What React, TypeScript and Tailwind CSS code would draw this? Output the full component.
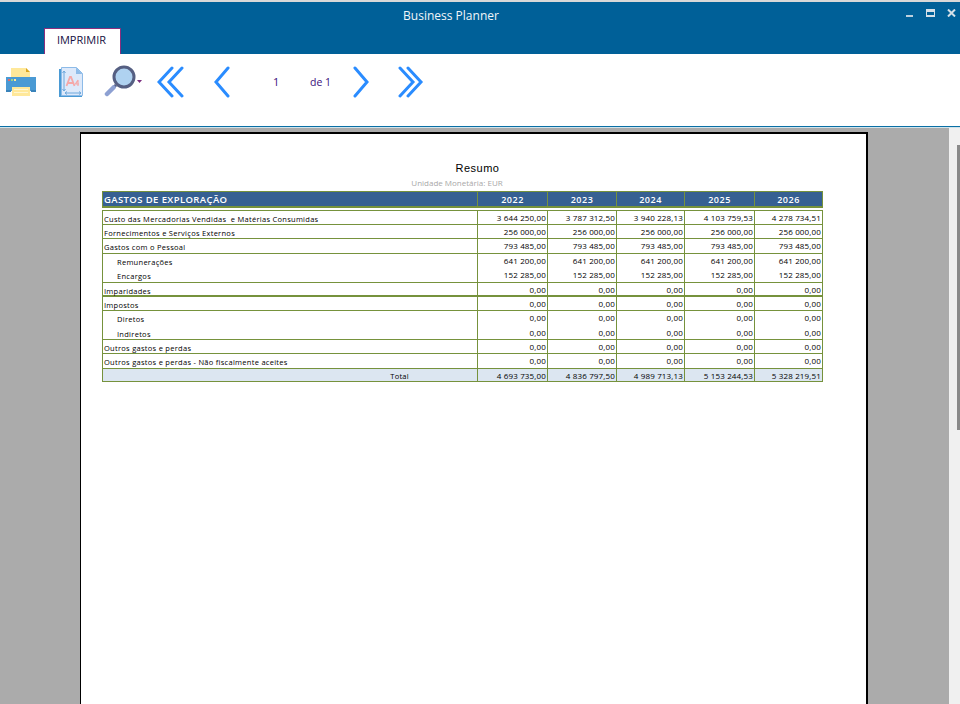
import React from 'react';

interface Row {
  label: string;
  values: string[];
  indent?: boolean;
  noLine?: boolean;
  thick?: boolean;
  h: string;
}

const zeros = ['0,00', '0,00', '0,00', '0,00', '0,00'];

const rows: Row[] = [
  { label: 'Custo das Mercadorias Vendidas  e Matérias Consumidas', values: ['3 644 250,00', '3 787 312,50', '3 940 228,13', '4 103 759,53', '4 278 734,51'], h: 'h-[14px]' },
  { label: 'Fornecimentos e Serviços Externos', values: ['256 000,00', '256 000,00', '256 000,00', '256 000,00', '256 000,00'], h: 'h-[14px]' },
  { label: 'Gastos com o Pessoal', values: ['793 485,00', '793 485,00', '793 485,00', '793 485,00', '793 485,00'], h: 'h-[15px]' },
  { label: 'Remunerações', values: ['641 200,00', '641 200,00', '641 200,00', '641 200,00', '641 200,00'], indent: true, noLine: true, h: 'h-[14px]' },
  { label: 'Encargos', values: ['152 285,00', '152 285,00', '152 285,00', '152 285,00', '152 285,00'], indent: true, h: 'h-[15px]' },
  { label: 'Imparidades', values: zeros, thick: true, h: 'h-[14px]' },
  { label: 'Impostos', values: zeros, h: 'h-[14px]' },
  { label: 'Diretos', values: zeros, indent: true, noLine: true, h: 'h-[15px]' },
  { label: 'Indiretos', values: zeros, indent: true, h: 'h-[14px]' },
  { label: 'Outros gastos e perdas', values: zeros, h: 'h-[14px]' },
  { label: 'Outros gastos e perdas - Não fiscalmente aceites', values: zeros, h: 'h-[15px]' },
];

const totals = ['4 693 735,00', '4 836 797,50', '4 989 713,13', '5 153 244,53', '5 328 219,51'];
const years = ['2022', '2023', '2024', '2025', '2026'];
const gridCols = 'grid grid-cols-[374px_70px_69px_68px_70px_68px]';

const PrinterIcon = () => (
  <svg width="32" height="32" viewBox="0 0 32 32">
    <path d="M6 2h15l4 4v8H6z" fill="#ffe89a" />
    <path d="M21 2l4 4h-4z" fill="#d9a520" />
    <rect x="1" y="11" width="30" height="14" fill="#4a9ad4" />
    <rect x="1" y="24" width="5" height="2" fill="#3a83ba" />
    <rect x="26" y="24" width="5" height="2" fill="#3a83ba" />
    <rect x="3" y="13" width="2" height="2" fill="#e06a6a" />
    <rect x="6" y="13" width="2" height="2" fill="#9ccf8a" />
    <rect x="9" y="13" width="2" height="2" fill="#ffe89a" />
    <rect x="7" y="21" width="18" height="9" fill="#ffe89a" />
    <rect x="9" y="23" width="14" height="1" fill="#fff6d0" />
    <rect x="9" y="26" width="14" height="1" fill="#fff6d0" />
  </svg>
);

const PageIcon = () => (
  <svg width="26" height="32" viewBox="0 0 26 32">
    <path d="M1 3h3v27h20v1H1z" fill="#4a9ad4" />
    <path d="M3.500 1.500h15l6 6v22h-21z" fill="#dde9fa" stroke="#8dbbe8" />
    <path d="M18 1.500l6.500 6.500H18z" fill="#8dbbe8" />
    <path d="M6 5v20M4.500 7L6 5l1.500 2M4.500 23L6 25l1.500-2" stroke="#6ea8dc" fill="none" />
    <path d="M7 27h16M9 25.500L7 27l2 1.500M21 25.500l2 1.500-2 1.500" stroke="#6ea8dc" fill="none" />
    <path d="M8.500 20l3.500-9h1l3.500 9M10 17h5" stroke="#f5a8a8" strokeWidth="1.800" fill="none" />
    <path d="M20 14l-2.500 4h3.500M20 14v6" stroke="#f5a8a8" strokeWidth="1.200" fill="none" />
  </svg>
);

const SearchIcon = () => (
  <svg width="38" height="34" viewBox="0 0 38 34">
    <circle cx="20" cy="12" r="10" fill="#afd2f0" stroke="#555f82" strokeWidth="3" />
    <path d="M12 20l-2.500 2.500" stroke="#555f82" strokeWidth="3" />
    <path d="M9.500 22.500L3 29" stroke="#8da0d2" strokeWidth="4.500" strokeLinecap="round" />
    <path d="M33 15h5l-2.500 3z" fill="#7a2d7e" />
  </svg>
);

const Chevron = ({ d, w }: { d: string; w: number }) => (
  <svg width={w} height="32" viewBox={`0 0 ${w} 32`} fill="none" stroke="#2a8cff" strokeWidth="3" strokeLinecap="round">
    <path d={d} />
  </svg>
);

export default function App() {
  return (
    <div className="w-[960px] h-[704px] overflow-hidden flex flex-col bg-white font-['Open_Sans',sans-serif]">
      {/* Title bar */}
      <div className="h-[54px] shrink-0 bg-[#006098] border-t-2 border-[#d8d8d8] relative flex flex-col">
        <div className="h-[26px] flex items-center justify-center pr-[58px]">
          <span className="text-[12px] text-[#f2f6fa] relative top-[1px]">Business Planner</span>
        </div>
        <div className="absolute right-[4px] top-[7px] flex items-center gap-[12px]">
          <div className="w-[7px] h-[2px] bg-[#bcd0de] mt-[6px]" />
          <div className="w-[9px] h-[8px] bg-[#d5e0e8] flex items-center ml-[1px]"><div className="w-[7px] h-[3px] bg-[#006098] ml-[1px] mt-[1px]" /></div>
          <svg width="9" height="8" viewBox="0 0 9 8"><path d="M1 0.500l7 7M8 0.500l-7 7" stroke="#d5e0e8" strokeWidth="2" /></svg>
        </div>
        <div className="mt-auto ml-[44px] w-[77px] h-[26px] bg-white border border-b-0 border-[#8a2f7e] flex items-center justify-center pr-[2px]">
          <span className="text-[11px] text-[#15103f] relative top-[-1px]">IMPRIMIR</span>
        </div>
      </div>

      {/* Toolbar */}
      <div className="h-[72px] shrink-0 bg-white flex items-start pt-[11px] relative">
        <div className="ml-[5px] mt-[1px]"><PrinterIcon /></div>
        <div className="ml-[21px] mt-[1px]"><PageIcon /></div>
        <div className="ml-[20px]"><SearchIcon /></div>
        <div className="ml-[15px] mt-[1px]"><Chevron w={28} d="M15 2L2 16l13 14M25 2L12 16l13 14" /></div>
        <div className="ml-[29px] mt-[1px]"><Chevron w={16} d="M14 2L2 16l12 14" /></div>
        <span className="ml-[43px] mt-[9px] w-[10px] text-[11px] text-[#3a0f7a]">1</span>
        <span className="ml-[27px] mt-[10px] w-[24px] text-[10.500px] text-[#3a0f7a]">de 1</span>
        <div className="ml-[19px] mt-[1px]"><Chevron w={16} d="M2 2l12 14L2 30" /></div>
        <div className="ml-[28px] mt-[1px]"><Chevron w={28} d="M3 2l13 14L3 30M11 2l13 14-13 14" /></div>
      </div>
      <div className="h-[2px] shrink-0 bg-[#d0e4ec] border-t border-[#0a6fa5]" />

      {/* Preview area */}
      <div className="flex-1 flex min-h-0">
        <div className="w-[949px] bg-[#ababab] pl-[80px] pt-[4px] overflow-hidden">
          <div className="w-[788px] h-[800px] bg-white border-t-2 border-l border-r-2 border-black pt-[27px] pl-[21px] text-black">
            <div className="w-[721px] text-center font-['Liberation_Sans',sans-serif] text-[11px] leading-[14px] tracking-[0.5px] pl-[30px]">Resumo</div>
            <div className="w-[721px] text-center text-[8px] leading-[10px] text-[#a8a8a8] mt-[3px] pr-[11px] mb-[3px]">Unidade Monetária: EUR</div>

            {/* Header */}
            <div className={`${gridCols} w-[721px] h-[17px] bg-[#366092] border border-[#76923c] border-b-2 text-white font-semibold`}>
              <div className="text-[9.500px] leading-[15px] pl-[1px] tracking-[0.4px]">GASTOS DE EXPLORAÇÃO</div>
              {years.map((y) => (
                <div key={y} className="border-l border-[#76923c] text-center text-[9px] leading-[16px] tracking-[0.5px]">{y}</div>
              ))}
            </div>

            {/* Body */}
            <div className="w-[721px] mt-[2px] border-t border-[#76923c]">
              {rows.map((r) => (
                <div
                  key={r.label}
                  className={`${gridCols} ${r.h} border-x border-[#76923c] ${r.noLine ? '' : r.thick ? 'border-b-2' : 'border-b'}`}
                >
                  <div className={`text-[7.500px] leading-[16px] whitespace-pre tracking-[0.28px] ${r.indent ? 'pl-[14px]' : 'pl-[1px]'}`}>{r.label}</div>
                  {r.values.map((v, i) => (
                    <div key={i} className="border-l border-[#76923c] text-right text-[8px] leading-[13px] pr-[1px] tracking-[0.15px]">{v}</div>
                  ))}
                </div>
              ))}
              <div className={`${gridCols} grid-rows-[12px] h-[13px] bg-[#dce6f1] border-x border-b border-[#76923c]`}>
                <div className="text-right pr-[68px] text-[7.500px] leading-[15px] tracking-[0.28px]">Total</div>
                {totals.map((v) => (
                  <div key={v} className="border-l border-[#76923c] text-right text-[8px] leading-[13px] pr-[1px] tracking-[0.15px]">{v}</div>
                ))}
              </div>
            </div>
          </div>
        </div>
        {/* Scrollbar */}
        <div className="w-[11px] bg-[#f0f0f0] pt-[17px] pl-[8px]">
          <div className="w-[3px] h-[285px] bg-[#8a8a8a]" />
        </div>
      </div>
    </div>
  );
}
